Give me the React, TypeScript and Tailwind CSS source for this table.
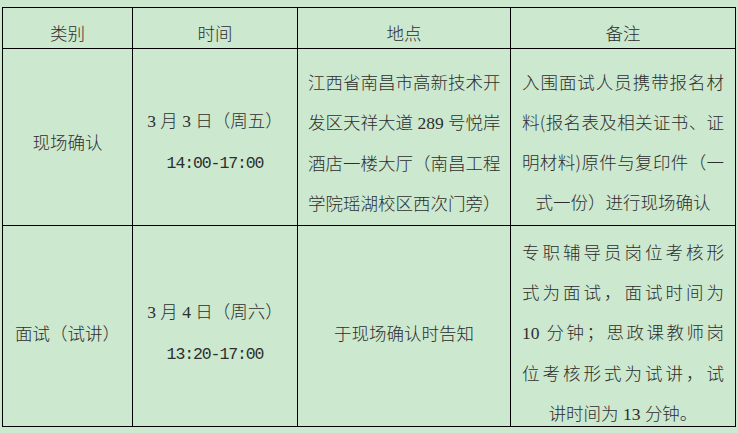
import React from "react";

const cjk = "font-['Noto_Sans_CJK_SC',sans-serif]";
const serifNum = "font-['Liberation_Serif',serif]";
const mono = "font-['Liberation_Mono',monospace] text-[16.5px] tracking-[-1.1px]";

function Cell({ children, className = "" }: { children: React.ReactNode; className?: string }) {
  return (
    <div className={`border-r border-b border-black flex flex-col justify-center ${className}`}>
      {children}
    </div>
  );
}

function C({ children }: { children: React.ReactNode }) {
  return <div className="leading-[40px] whitespace-nowrap text-center">{children}</div>;
}

function J({ children }: { children: React.ReactNode }) {
  return <div className="leading-[40px] text-justify [text-align-last:justify]">{children}</div>;
}

function N({ children }: { children: React.ReactNode }) {
  return <span className={serifNum}>{children}</span>;
}

export default function App() {
  return (
    <div className={`w-[738px] h-[433px] bg-[#cce8cf] pl-[2px] pt-[7px] text-[17.5px] font-light text-[#2e2e2e] ${cjk}`}>
      <div className="grid grid-cols-[130px_165px_213px_225px] grid-rows-[41px_177px_201px] w-[734px] border-l border-t border-black">
        {/* header */}
        <Cell className="pt-[10px]"><C>类别</C></Cell>
        <Cell className="pt-[10px]"><C>时间</C></Cell>
        <Cell className="pt-[10px]"><C>地点</C></Cell>
        <Cell className="pt-[10px]"><C>备注</C></Cell>

        {/* row 1 */}
        <Cell className="pt-[10px]"><C>现场确认</C></Cell>
        <Cell className="pt-[10px]">
          <C><N>3&nbsp;</N>月<N>&nbsp;3&nbsp;</N>日（周五）</C>
          <C><span className={mono}>14:00-17:00</span></C>
        </Cell>
        <Cell className="pt-[10px] px-[10px]">
          <C>江西省南昌市高新技术开</C>
          <C>发区天祥大道<N> 289 </N>号悦岸</C>
          <C>酒店一楼大厅（南昌工程</C>
          <C>学院瑶湖校区西次门旁）</C>
        </Cell>
        <Cell className="pt-[10px] px-[11px]">
          <J>入围面试人员携带报名材</J>
          <J>料(报名表及相关证书、证</J>
          <J>明材料)原件与复印件（一</J>
          <C>式一份）进行现场确认</C>
        </Cell>

        {/* row 2 */}
        <Cell className="pt-[14px]"><C>面试（试讲）</C></Cell>
        <Cell className="pt-[14px]">
          <C><N>3&nbsp;</N>月<N>&nbsp;4&nbsp;</N>日（周六）</C>
          <C><span className={mono}>13:20-17:00</span></C>
        </Cell>
        <Cell className="pt-[14px] px-[10px]">
          <C>于现场确认时告知</C>
        </Cell>
        <Cell className="pt-[14px] px-[11px]">
          <J>专职辅导员岗位考核形</J>
          <J>式为面试，面试时间为</J>
          <J><N>10 </N>分钟；思政课教师岗</J>
          <J>位考核形式为试讲，试</J>
          <C>讲时间为<N> 13 </N>分钟。</C>
        </Cell>
      </div>
    </div>
  );
}
